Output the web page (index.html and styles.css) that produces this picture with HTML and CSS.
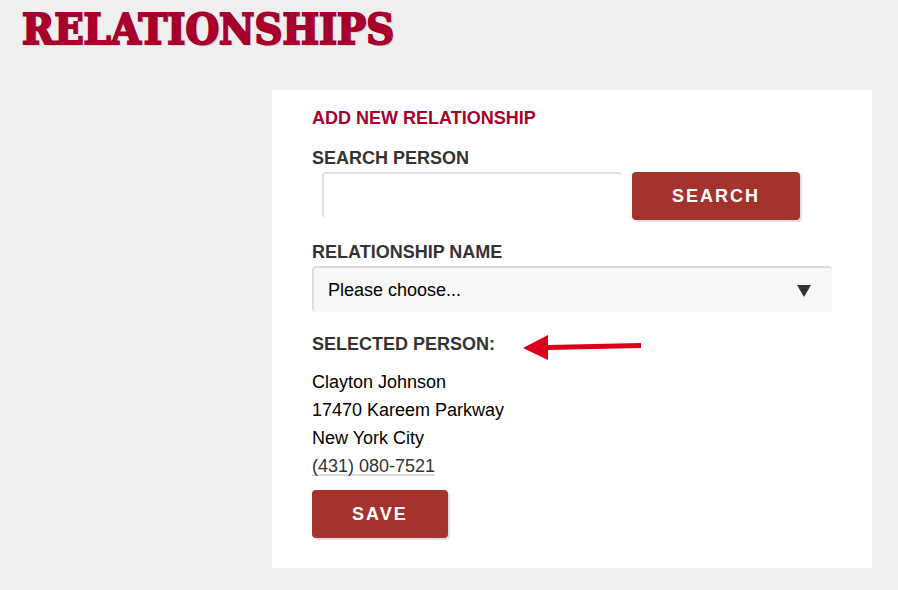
FILE: index.html
```html
<!DOCTYPE html>
<html lang="en">
  <head>
    <meta charset="UTF-8" />
    <meta name="viewport" content="width=device-width, initial-scale=1.0" />
    <title>Relationships</title>
    <link rel="stylesheet" href="styles.css">
  </head>
  <body>
    <h1 class="page-title">RELATIONSHIPS</h1>
    <main class="panel">
      <h2 class="panel-title">ADD NEW RELATIONSHIP</h2>
      <form>
        <div class="form-group">
          <label for="person">SEARCH PERSON</label>
          <div class="search-row">
            <input type="text" id="person" class="field" />
            <button type="button" class="btn">SEARCH</button>
          </div>
        </div>
        <div class="form-group">
          <label for="relationship">RELATIONSHIP NAME</label>
          <div class="select-wrap">
            <select id="relationship" class="field">
              <option>Please choose...</option>
            </select>
            <span class="select-arrow"></span>
          </div>
        </div>
        <div class="selected-head">
          <h3>SELECTED PERSON:</h3>
          <svg class="arrow" width="120" height="28" viewBox="0 0 120 28" aria-hidden="true">
            <path d="M0 18 L25 5 V15 L118 13 V18 L25 20 V30 Z" fill="#d9001b" />
          </svg>
        </div>
        <address class="person">
          Clayton Johnson<br />
          17470 Kareem Parkway<br />
          New York City<br />
          <a href="tel:4310807521">(431) 080-7521</a>
        </address>
        <button type="submit" class="btn">SAVE</button>
      </form>
    </main>
  </body>
</html>
```

FILE: styles.css
```css
* {
  box-sizing: border-box;
}
body {
  margin: 0;
  background-color: #efefef;
  font-family: "Liberation Sans", Arial, sans-serif;
  font-size: 18px;
  line-height: 28px;
  color: #000;
}
.page-title {
  margin: 0;
  padding: 2px 22px 0;
  font-family: "DejaVu Serif Condensed", "DejaVu Serif", serif;
  font-size: 43px;
  font-weight: bold;
  line-height: 54px;
  color: #a6002d;
  -webkit-text-stroke: 2px #a6002d;
  text-shadow: 2px 2px 0 #d8d8d8;
}
.panel {
  margin: 34px 26px 22px 272px;
  padding: 14px 40px 30px;
  background: white;
}
.panel-title {
  margin: 0 0 12px;
  font-size: 18px;
  color: #a6002d;
}
.form-group {
  margin-bottom: 18px;
}
label {
  display: block;
  font-weight: bold;
  color: #333;
}
.search-row {
  display: flex;
  align-items: flex-start;
  gap: 10px;
  padding: 0 32px 0 10px;
}
.field {
  width: 100%;
  height: 46px;
  padding: 0 14px;
  border: 0 solid #e0e0e0;
  border-width: 2px 0 0 2px;
  border-radius: 4px;
  background: white;
  font-family: inherit;
  font-size: 18px;
  color: #000;
}
.search-row .field {
  flex: 1;
  min-width: 0;
}
.select-wrap {
  display: grid;
  align-items: center;
}
.select-wrap .field,
.select-arrow {
  grid-area: 1 / 1;
}
.select-wrap .field {
  appearance: none;
  border-color: #dcdcdc;
  background: #f7f7f7;
}
.select-arrow {
  justify-self: end;
  margin: 4px 21px 0 0;
  border: 7px solid transparent;
  border-top: 12px solid #333;
  border-bottom: 0;
  pointer-events: none;
}
.btn {
  height: 48px;
  padding: 0 40px;
  border: 0;
  border-radius: 4px;
  background: #a3332c;
  box-shadow: 2px 2px 0 #e0e0e0;
  font-family: inherit;
  font-size: 18px;
  font-weight: bold;
  letter-spacing: 2px;
  color: white;
  cursor: pointer;
}
.selected-head {
  display: flex;
  align-items: center;
  gap: 28px;
  margin-bottom: 10px;
}
.selected-head h3 {
  margin: 0;
  font-size: 18px;
  color: #333;
}
.arrow {
  flex: none;
  overflow: visible;
}
.person {
  margin-bottom: 10px;
  font-style: normal;
}
.person a {
  color: #333;
  text-decoration: underline 2px #dcdcdc;
  text-decoration-skip-ink: none;
  text-underline-offset: 2px;
}
```
